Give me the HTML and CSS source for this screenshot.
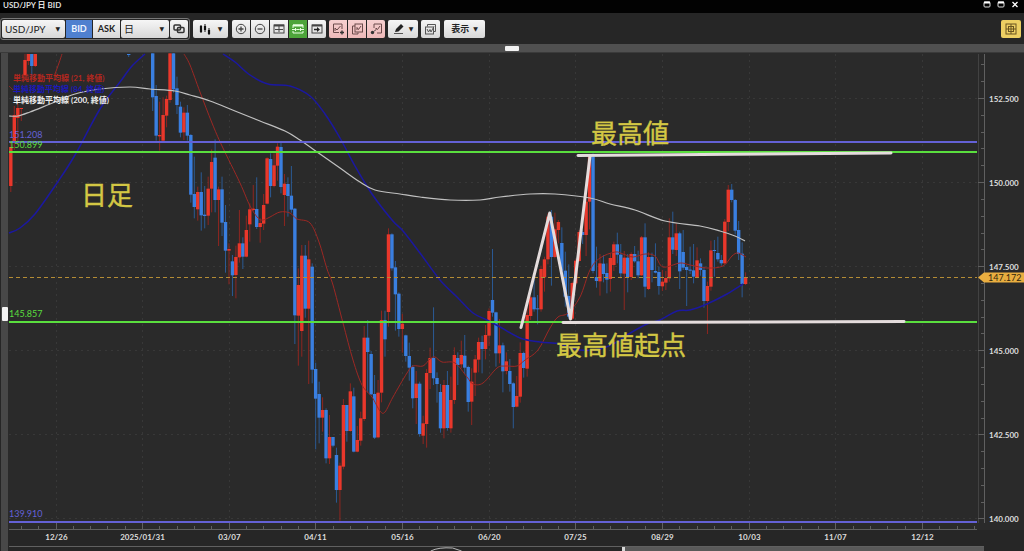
FILE: index.html
```html
<!DOCTYPE html>
<html lang="ja">
<head>
<meta charset="utf-8">
<meta name="viewport" content="width=device-width, initial-scale=1">
<title>USD/JPY 日 BID</title>
<link rel="stylesheet" href="styles.css">
</head>
<body>
<div class="window">
  <header class="titlebar">
    <h1 class="title">USD/JPY 日 BID</h1>
    <div class="window-buttons">
      <button class="win-btn" aria-label="最小化"><svg width="8" height="7" viewBox="0 0 8 7"><rect x="1" y="1" width="6" height="5" rx="1" fill="none" stroke="#ddd"/><path d="M1 1.5h6" stroke="#fff" stroke-width="2"/></svg></button>
      <button class="win-btn" aria-label="最大化"><svg width="8" height="7" viewBox="0 0 8 7"><rect x="1" y="1" width="6" height="5" rx="1" fill="none" stroke="#ddd"/><path d="M1 1.5h6" stroke="#fff" stroke-width="2"/></svg></button>
      <button class="win-btn" aria-label="閉じる"><svg width="8" height="7" viewBox="0 0 8 7"><path d="M1.5 1l5 5M6.500 1l-5 5" stroke="#fff" stroke-width="1.300"/></svg></button>
    </div>
  </header>

  <nav class="toolbar" aria-label="チャート操作">
    <div class="group framed">
      <label class="picker pair"><select aria-label="通貨ペア"><option>USD/JPY</option></select></label>
      <button class="btn bid">BID</button>
      <button class="btn ask">ASK</button>
      <label class="picker period"><select aria-label="足種"><option>日</option></select></label>
      <button class="btn link" aria-label="連動"><svg width="12" height="10" viewBox="0 0 12 10" fill="none" stroke="#333" stroke-width="1.500"><rect x="1" y="1" width="6.500" height="5" rx="1"/><rect x="4.500" y="3.500" width="6.500" height="5" rx="1"/></svg></button>
    </div>
    <button class="btn solo type" aria-label="チャート種類"><svg width="12" height="12" viewBox="0 0 12 12" stroke="#111"><path d="M2 2v8M6 1v8M10 5v7" stroke-width="1"/><path d="M2 3v6M6 3v4M10 7v4" stroke-width="2.200"/></svg><span class="arrow">▼</span></button>
    <div class="group joined zoomers">
      <button class="btn cell" aria-label="拡大"><svg width="12" height="12" viewBox="0 0 12 12" fill="none" stroke="#444"><circle cx="6" cy="6" r="4.700"/><path d="M3.500 6h5M6 3.500v5" stroke-width="1.300"/></svg></button>
      <button class="btn cell" aria-label="縮小"><svg width="12" height="12" viewBox="0 0 12 12" fill="none" stroke="#444"><circle cx="6" cy="6" r="4.700"/><path d="M3.500 6h5" stroke-width="1.300"/></svg></button>
      <button class="btn cell" aria-label="全体表示"><svg width="12" height="12" viewBox="0 0 12 12" fill="none" stroke="#444"><rect x="1" y="2" width="10" height="8"/><path d="M1 2.500h10" stroke-width="2"/><path d="M2 6.500h8M6 3v6"/></svg></button>
      <button class="btn cell active" aria-label="自動調整" aria-pressed="true"><svg width="12" height="12" viewBox="0 0 12 12" fill="none" stroke="#e9ffe2"><path d="M1 5V2h10v3M1 8v2h10V8"/><path d="M1 2.500h10" stroke-width="2"/><path d="M0 6.500h4M8 6.500h4M5 6.500h2M3 5l1.500 1.500L3 8M9 5L7.500 6.500 9 8"/></svg></button>
      <button class="btn cell" aria-label="右端へ"><svg width="12" height="12" viewBox="0 0 12 12" fill="none" stroke="#444"><rect x="1" y="2" width="10" height="8"/><path d="M1 2.500h10" stroke-width="2"/><path d="M3 6.500h4" stroke="#222" stroke-width="1.500"/><path d="M6 4l3 2.500L6 9z" fill="#222" stroke="none"/></svg></button>
    </div>
    <div class="group joined pink">
      <button class="btn cell" aria-label="指標追加"><svg width="13" height="12" viewBox="0 0 13 12" fill="none" stroke="#6b4a4a"><path d="M10 6V1H1.500v8.500H7"/><path d="M3 8V5l2 2 3.500-4"/><path d="M8 9.500h4M10 7.500v4" stroke="#333" stroke-width="1.400"/></svg></button>
      <button class="btn cell" aria-label="指標一覧"><svg width="13" height="12" viewBox="0 0 13 12" fill="none" stroke="#6b4a4a"><path d="M4 3H1.500v8H7V9.500"/><rect x="4" y="1" width="7.500" height="8"/><path d="M6 7V4.500l1.500 2L10 3"/></svg></button>
      <button class="btn cell" aria-label="指標設定"><svg width="13" height="12" viewBox="0 0 13 12" fill="none" stroke="#6b4a4a"><path d="M4 5V1h7.500v9H7"/><path d="M6 7V5l1.500 1.500L10 3"/><path d="M5.500 7L4 8.500" stroke="#333"/><circle cx="2.500" cy="9.500" r="1.700" fill="#333" stroke="none"/></svg></button>
    </div>
    <button class="btn solo pen" aria-label="描画"><svg width="12" height="12" viewBox="0 0 12 12"><path d="M2 9l1-3 5-5 2.500 2.500-5 5z" fill="#222"/><path d="M1 10.500h9" stroke="#555"/></svg><span class="arrow">▼</span></button>
    <button class="btn solo copy" aria-label="チャート複製"><svg width="13" height="12" viewBox="0 0 13 12" fill="none" stroke="#555"><path d="M3.500 3.500V1.500h8v7H10"/><rect x="1.500" y="4" width="8" height="7"/><path d="M3 6l1.500 3L6 6.500 7 9l3-5.500"/></svg></button>
    <button class="btn solo view">表示<span class="arrow">▼</span></button>
    <button class="btn layout" aria-label="レイアウト"><svg width="12" height="12" viewBox="0 0 12 12" fill="none" stroke="#6b5520"><rect x="1" y="1" width="10" height="10"/><path d="M1 6h10M6 1v10"/><rect x="3.500" y="3.500" width="5" height="5"/></svg></button>
  </nav>

  <div class="splitter"><span class="grip"></span></div>

  <main class="workspace">
    <div class="rail"><span class="grip tall"></span></div>
    <div class="panes">
      <svg class="chart" id="chart" viewBox="8 53 1016 494" preserveAspectRatio="xMinYMin meet" role="img" aria-label="USD/JPY 日足チャート"></svg>
      <div class="navigator">
        <svg class="overview" viewBox="0 0 616 4" preserveAspectRatio="none"><path d="M424 4q8-4 22-3l9 3" fill="none" stroke="#bbb"/></svg>
        <div class="range"></div>
      </div>
    </div>
  </main>
</div>
<script src="chart.js"></script>
</body>
</html>
```

FILE: styles.css
```css
* { box-sizing: border-box; }
body {
  margin: 0;
  background: #262626;
  color: #ddd;
  font-family: Lato, "Noto Sans CJK JP", sans-serif;
}
.window {
  display: flex;
  flex-direction: column;
  min-height: 100vh;
  overflow: hidden;
}
.titlebar {
  display: flex;
  justify-content: space-between;
  height: 13px;
  padding: 0 5px 0 3px;
  background: #020202;
}
.title {
  margin: 0;
  font-size: 8px;
  font-weight: 700;
  line-height: 10px;
}
.window-buttons { display: flex; gap: 6px; }
.win-btn {
  display: flex;
  width: 8px;
  height: 8px;
  padding: 1px 0 0;
  border: 0;
  background: none;
}
.toolbar {
  display: flex;
  align-items: center;
  gap: 3px;
  height: 31px;
  padding: 0 3px 0 0;
  background: #262626;
}
.group { display: flex; }
.framed {
  gap: 1px;
  padding: 1px;
  border: 1px solid #777;
  border-radius: 3px;
}
.btn, .picker {
  display: flex;
  align-items: center;
  justify-content: center;
  height: 18px;
  padding: 0;
  border: 0;
  border-radius: 2px;
  background: linear-gradient(#f6f6f6, #d8d8d8);
  color: #222;
  font-family: inherit;
  font-size: 9px;
  font-weight: 700;
}
.picker { position: relative; }
.picker select {
  width: 100%;
  height: 18px;
  padding: 0 3px;
  border: 0;
  background: none;
  color: #222;
  font-family: inherit;
  font-size: 10px;
  appearance: none;
}
.picker::after {
  content: "▼";
  position: absolute;
  right: 5px;
  font-family: "DejaVu Sans", sans-serif;
  font-size: 6px;
  pointer-events: none;
}
.pair { width: 63px; }
.period { width: 48px; }
.bid { width: 26px; background: #4f80cf; color: #eef4ff; border-radius: 0; }
.ask { width: 27px; border-radius: 0; }
.link { width: 18px; }
.arrow { font-family: "DejaVu Sans", sans-serif; font-size: 6px; }
.solo { gap: 4px; }
.type { width: 35px; gap: 7px; }
.joined { gap: 1px; }
.zoomers { margin-left: 1px; }
.cell { width: 18px; border-radius: 0; }
.cell:first-child { border-radius: 2px 0 0 2px; }
.cell:last-child { border-radius: 0 2px 2px 0; }
.active { background: #4da43a; }
.pink .cell { background: linear-gradient(#f6d0d0, #efb9b9); }
.pen { width: 30px; }
.copy { width: 19px; }
.view { width: 41px; margin-left: 1px; }
.layout { width: 20px; margin-left: auto; background: #edcf63; }
.splitter {
  display: flex;
  justify-content: center;
  align-items: center;
  height: 9px;
  background: #505050;
  border-bottom: 1px solid #3a3a3a;
}
.grip { width: 14px; height: 5px; background: #f2f2f2; border-radius: 1px; }
.workspace { display: flex; flex: 1; }
.rail {
  display: flex;
  align-items: center;
  flex: none;
  width: 8px;
  padding: 24px 0 0 1px;
  background: #484848;
  border-left: 1px solid #262626;
}
.tall { width: 6px; height: 14px; }
.panes { flex: 1; min-width: 0; display: flex; flex-direction: column; }
.chart { display: block; width: 100%; flex: none; background: #2a2a2a; }
.navigator { display: flex; flex: 1; min-height: 4px; padding-right: 40px; }
.overview { flex: 616; height: 4px; min-width: 0; }
.range { flex: 360; background: #595959; border-left: 3px solid #d8d8d8; }

.grid { stroke: #383838; stroke-dasharray: 2 4; }
.axis { stroke: #606060; fill: none; }
.axis-faint { stroke: #424242; }
.margin { fill: #262626; }
.axis-text { fill: #ddd; font-size: 8px; font-weight: 700; }
.time-text { text-anchor: middle; }
.ma { fill: none; stroke-width: 1; stroke-linejoin: round; }
.ma-short { stroke: #9c2824; }
.ma-mid { stroke: #1b18a0; stroke-width: 1.500; }
.ma-long { stroke: #c0c0c0; stroke-width: 1.200; }
.wick-up { stroke: #8f2620; }
.wick-down { stroke: #2b5a94; }
.body-up { fill: #e9372b; }
.body-down { fill: #3a7fe0; }
.level { stroke-width: 2; }
.level-high { stroke: #6461d6; fill: #6461d6; }
.level-key { stroke: #5ade3e; fill: #5ade3e; }
.level-text { stroke: none; font-size: 9px; }
.current { stroke: #b48c35; stroke-dasharray: 4 3; }
.tag { fill: #e9ae40; }
.tag-text { fill: #33270c; font-size: 9px; }
.stroke { fill: none; stroke: #e4dcdc; stroke-width: 3; stroke-linejoin: round; stroke-linecap: round; }
.note { fill: #d3c744; stroke: #d3c744; stroke-width: .4; font-family: "Noto Sans CJK JP", sans-serif; font-size: 26px; }
.legend { font-size: 8px; font-weight: 700; }
.legend-short { fill: #b3271f; }
.legend-mid { fill: #1b18b8; }
.legend-long { fill: #eee; }
```

FILE: chart.js
```js
const NS = "http://www.w3.org/2000/svg";
const chart = document.getElementById("chart");

function add(name, cls, attrs, text) {
  const el = document.createElementNS(NS, name);
  if (cls) el.setAttribute("class", cls);
  for (const key in attrs) el.setAttribute(key, attrs[key]);
  if (text) el.textContent = text;
  chart.appendChild(el);
}
const line = (cls, x1, y1, x2, y2) => add("line", cls, { x1, y1, x2, y2 });
const label = (cls, x, y, text) => add("text", cls, { x, y }, text);

// Smooth curve through the given points.
function curve(cls, pts) {
  let d = "M" + pts[0];
  for (let i = 0; i < pts.length - 1; i++) {
    const a = pts[i - 1] || pts[i], b = pts[i], c = pts[i + 1], e = pts[i + 2] || c;
    d += "C" + [b[0] + (c[0] - a[0]) / 6, b[1] + (c[1] - a[1]) / 6,
      c[0] - (e[0] - b[0]) / 6, c[1] - (e[1] - b[1]) / 6, c[0], c[1]];
  }
  add("path", cls, { d });
}

// Grid
const STEP_X = 86.65, STEP_Y = 84.08;
const dates = ["12/26", "2025/01/31", "03/07", "04/11", "05/16", "06/20", "07/25", "08/29", "10/03", "11/07", "12/12"];
const prices = ["152.500", "150.000", "147.500", "145.000", "142.500", "140.000"];
const dateX = i => Math.floor(56 + i * STEP_X) + 0.5;
const priceY = i => Math.round(98 + i * STEP_Y) + 0.5;
dates.forEach((d, i) => line("grid", dateX(i), 54, dateX(i), 522));
prices.forEach((p, i) => line("grid", 9, priceY(i), 977, priceY(i)));

// Candles: side, high, body top, body bottom, low (thirds of a pixel, from each group's base)
const groups = [
  { base: 50, rows: `B 10 10 142 183|B 105 138 257 272|R 155 255 259 302|R 142 195 272 272|R 137 147 197 232|R 10 10 150 158|B 10 10 118 128|B 80 115 165 192|B 155 170 248 262|R 172 188 247 270|B 165 188 257 272|B 252 255 434 458|B 320 432 471 505|R 410 426 478 512|B 367 426 496 542|B 408 494 498 535|R 380 416 497 525|R 298 336 416 487|B 268 323 450 487|R 410 418 450 588|B 380 418 518 558|B 465 516 602 668|R 580 597 602 703|B 615 634 676 738|R 587 621 675 745|R 480 580 622 638|B 562 580 620 657|R 497 540 620 622|R 460 478 523 575|R 405 476 480 483|B 382 477 531 537|R 505 519 531 578|R 432 465 521 540|R 322 325 461 463|B 310 327 408 442|R 310 346 408 412|R 280 290 347 392|B 275 291 411 430|R 372 401 435 528|B 382 402 438 500|B 348 437 479 488|B 474 476 796 882|R 655 705 797 947|R 585 617 843 920|B 585 617 776 803|R 572 628 776 1002|B 640 650 959 1000` },
  { base: 270, rows: `B 278 297 386 538|B 335 372 443 520|R 382 420 443 485|B 415 420 565 580|R 435 501 565 582|B 501 501 527 532|B 533 555 660 698|R 578 587 660 752` },
  { base: 220, rows: `R 537 555 740 748|B 555 555 633 665|R 490 514 633 635|B 503 529 695 697|R 618 660 695 697|R 575 595 662 677|R 318 353 597 603|B 300 353 396 518|B 393 402 523 525|B 465 522 653 657|R 480 518 652 655|R 272 300 518 547|B 272 300 358 410|R 25 43 276 320|B 40 43 145 152|B 123 142 223 332|B 217 221 327 350|R 282 311 327 398|B 344 346 408 425|B 368 408 443 482|B 435 441 535 565|R 453 491 534 612|B 485 491 642 650|R 587 610 647 672|R 447 459 612 683|R 383 414 459 507|B 262 414 475 495|B 457 474 492 548|B 492 516 625 638|R 480 495 625 655|B 453 495 624 632|R 470 540 625 638|R 382 405 540 552|B 397 414 435 495|R 362 405 433 445|B 345 407 443 462|B 437 441 546 575|R 445 485 545 615|R 405 418 458 528|R 353 366 419 457|B 347 366 387 460|R 315 345 387 418|R 265 273 347 378|B 87 240 278 290|B 275 277 400 440|R 297 376 400 430|B 368 376 454 517|R 397 424 453 463|B 417 453 492 515|B 487 490 561 625|R 468 528 560 562` },
  { base: 120, rows: `R 667 699 830 848|B 695 699 744 773|R 560 585 746 770|R 527 532 588 600|B 480 532 568 575|B 525 565 568 613|R 437 447 568 575|R 410 418 472 515|R 280 290 418 433|B 270 290 411 497|R 278 328 411 415|R 300 306 330 370|B 322 369 452 457|B 395 452 530 560|B 433 528 590 597|R 485 489 596 600|R 418 422 490 493|R 330 336 423 425|B 330 336 345 372|R 240 245 345 408|R 103 105 245 328|B 100 110 453 460|B 380 471 483 503|R 402 430 484 527|B 405 431 462 487|B 430 459 479 520|R 400 414 477 515|R 365 373 435 453|B 338 373 404 430|B 372 404 460 475|R 393 413 461 570|B 402 413 471 517|R 397 402 471 480|B 378 402 424 428|B 392 424 466 475|R 348 352 466 468|B 310 352 500 532|R 397 411 507 510|B 398 411 450 487|B 370 453 458 460|B 440 456 498 524|R 450 485 499 513|R 453 474 488 510|R 295 352 475 485|B 275 352 389 402|R 310 340 390 408|B 335 340 454 507|B 330 396 443 450|B 435 441 450 558|B 380 449 452 462|B 372 451 470 490|R 382 421 472 475|B 415 430 450 467|B 440 450 543 563|R 485 498 543 642|R 362 391 500 512|B 360 390 393 470|B 350 399 418 425|B 405 420 430 437|R 297 305 430 433|R 195 209 306 333|B 192 209 240 247|B 237 240 332 343|B 303 330 402 420|B 367 401 492 532|R 457 473 492 495` }
];
function candle(side, x, high, top, bottom, low) {
  const dir = side === "R" ? "up" : "down";
  line("wick-" + dir, x, high, x, low);
  add("rect", "body-" + dir, { x: x - 1.7, y: top, width: 3.4, height: Math.max(bottom - top, 1) });
}
const all = groups.flatMap(g => g.rows.split("|").map(r => {
  const [side, ...v] = r.split(" ");
  return [side, ...v.map(n => g.base + n / 3)];
}));
const FIRST = 152.7, LAST = 745.6, PITCH = (LAST - FIRST) / (all.length - 1);
all.forEach(([side, ...v], i) => candle(side, FIRST + i * PITCH, ...v));
[
  ["R", 10.8, 143, 147, 186, 192], ["R", 14.3, 106, 115, 141, 150], ["R", 17.8, 104, 108, 118, 145],
  ["R", 21.3, 108, 108, 109, 121], ["R", 25, 54, 60, 75, 77], ["R", 28.4, 54, 54, 61, 65],
  ["B", 31.8, 54, 54, 66, 75], ["R", 35.3, 54, 54, 66, 67], ["B", 128.7, 54, 54, 54, 57]
].forEach(c => candle(...c));

// Moving averages
curve("ma ma-short", [[9, 86], [12, 89], [13, 90]]);
curve("ma ma-short", [[55, 74], [59, 63], [62, 54]]);
curve("ma ma-short", [[184, 54], [190, 65], [200, 92], [212, 123], [222, 146], [240, 183], [250, 206], [258, 218], [263, 220], [270, 217], [280, 212], [290, 213], [297, 219], [310, 223], [319, 242], [327, 269], [333, 285], [343, 323], [353, 360], [362, 385], [372, 397], [380, 411], [385, 412], [393, 397], [407, 373], [413, 366], [423, 366], [430, 359], [435, 357], [442, 362], [455, 363], [467, 377], [473, 384], [483, 383], [497, 368], [505, 366], [517, 366], [525, 360], [538, 350], [550, 328], [558, 317], [568, 313], [580, 297], [590, 270], [600, 258], [615, 252], [623, 254], [633, 257], [645, 254], [655, 256], [663, 267], [680, 263], [690, 265], [707, 268], [723, 266], [732, 256], [738, 253], [746, 257]]);
curve("ma ma-mid", [[9, 233], [20, 228], [35, 214], [57, 183], [75, 155], [100, 109], [120, 82], [132, 66], [145, 54]]);
curve("ma ma-mid", [[223, 54], [235, 62], [250, 75], [268, 84], [290, 86], [310, 96], [325, 114], [340, 138], [355, 166], [372, 194], [392, 220], [403, 231], [420, 253], [440, 280], [457, 297], [473, 313], [487, 320], [500, 327], [520, 338], [540, 342], [560, 344], [580, 350], [600, 349], [617, 342], [627, 335], [647, 324], [660, 320], [677, 311], [690, 310], [707, 304], [727, 294], [743, 284]]);
curve("ma ma-long", [[9, 116], [18, 116], [30, 112], [50, 104], [75, 94], [100, 89], [130, 87], [150, 89], [175, 91], [190, 95], [210, 101], [235, 111], [260, 121], [285, 131], [300, 140], [320, 154], [340, 168], [360, 182], [375, 190], [400, 194], [420, 197], [450, 200], [480, 200], [500, 197], [530, 194], [555, 194], [590, 198], [610, 204], [635, 210], [665, 221], [700, 226], [720, 231], [735, 236], [745, 241]]);

// Price levels
line("level level-high", 9, 142, 977, 142);
line("level level-key", 9, 152, 977, 152);
line("level level-key", 9, 322, 977, 322);
line("current", 9, 277.5, 977, 277.5);
label("level-high level-text", 9, 138, "151.208");
label("level-key level-text", 9, 148, "150.899");
label("level-key level-text", 9, 317, "145.857");
label("level-high level-text", 9, 517, "139.910");

// Legend
label("legend legend-short", 13, 81, "単純移動平均線 (21, 終値)");
label("legend legend-mid", 13, 92, "単純移動平均線 (84, 終値)");
label("legend legend-long", 13, 103, "単純移動平均線 (200, 終値)");

// Axes
add("rect", "margin", { x: 8, y: 530, width: 1016, height: 17 });
line("axis-faint", 978.5, 54, 978.5, 523);
line("axis", 984.5, 54, 984.5, 523);
line("axis", 9, 529.5, 977, 529.5);
line("axis", 9, 546.5, 984, 546.5);
for (let k = -2; k <= 53; k++) {
  const x = Math.floor(56 + k * STEP_X / 5) + 0.5;
  if (x > 9 && x < 978) line("axis", x, k % 5 ? 526 : 523, x, 529);
}
for (let k = -2; k <= 25; k++) {
  const y = Math.round(98 + k * STEP_Y / 5) + 0.5;
  line("axis", k % 5 ? 981 : 978, y, 984, y);
}
line("level level-high", 9, 522, 977, 522);
dates.forEach((d, i) => label("axis-text time-text", dateX(i), 540, d));
prices.forEach((p, i) => label("axis-text", 989, priceY(i) + 3, p));
add("path", "tag", { d: "M978 277.5l6-5h40v10h-40z" });
label("tag-text", 988, 281, "147.172");

// Hand-drawn marks
add("path", "stroke", { d: "M578 155.500L891 153" });
add("path", "stroke", { d: "M563 322.500L904 321.500" });
add("path", "stroke", { d: "M521 327.500L549.700 213L570.500 319L590 156" });
label("note", 81, 205, "日足");
label("note", 591, 143, "最高値");
label("note", 556, 355, "最高値起点");
```
